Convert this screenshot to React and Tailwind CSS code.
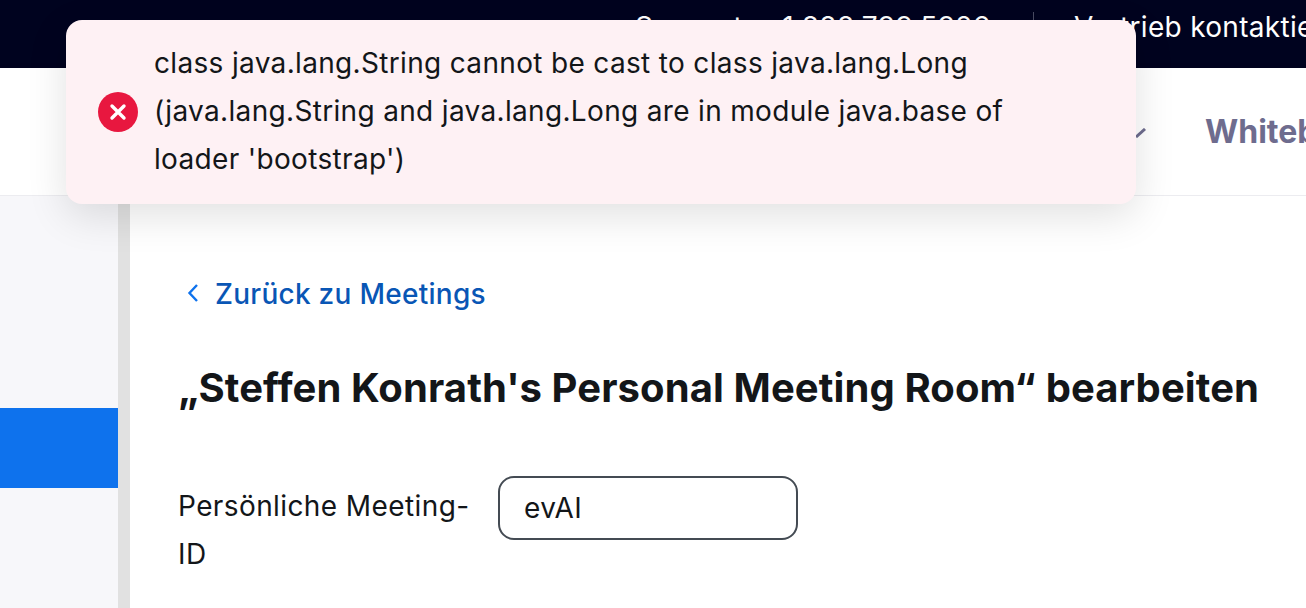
const App = () => {
  return (
    <div className="relative h-[608px] w-[1306px] overflow-hidden bg-white font-['Inter',sans-serif]">
      {/* Top bar */}
      <div className="flex h-[68px] items-center bg-[#00031f] pb-[14px] pl-[635px] text-white text-[28px] tracking-[0.3px] whitespace-nowrap">
        <div className="flex w-[357px] shrink-0 leading-[50px]">
          <span>Support:</span>
          <span className="ml-[31px]">1.888.799.5926</span>
        </div>
        <div className="ml-[41px] h-[30px] w-px shrink-0 bg-[#4a4c63]"></div>
        <span className="ml-[40px] shrink-0 leading-[50px]">Vertrieb kontaktieren</span>
      </div>

      {/* Nav */}
      <div className="flex h-[128px] items-center justify-end border-b border-[#ececf0] bg-white shadow-[0_2px_8px_rgba(0,0,0,0.07)] whitespace-nowrap">
        <svg width="12" height="10" viewBox="0 0 12 10" className="mr-[58px] mt-[2px]" fill="none">
          <path d="M1 9 L10 1" stroke="#6e6c8e" strokeWidth="3" />
        </svg>
        <div className="w-[101px] overflow-hidden text-[32px] font-bold text-[#6e6c8e]">Whiteboard</div>
      </div>

      {/* Body */}
      <div className="flex h-[412px]">
        <div className="w-[118px] bg-[#f7f7fa] pt-[212px]">
          <div className="h-[80px] bg-[#0e72ed]"></div>
        </div>
        <div className="w-[12px] bg-[#e1e1e1]"></div>
        <div className="flex-1 bg-white pl-[48px] pt-[78px]">
          <a className="flex items-center text-[#0956b5] text-[28px] tracking-[0.27px] leading-[40px] font-medium">
            <svg width="14" height="20" viewBox="0 0 14 20" className="ml-[8px] mr-[15px] mb-[2px]" fill="none">
              <path d="M11 2 L3.5 10 L11 18" stroke="#0e72ed" strokeWidth="2.4" />
            </svg>
            Zurück zu Meetings
          </a>
          <h1 className="mt-[49px] text-[40px] tracking-[0.1px] leading-[50px] font-bold text-[#131619] whitespace-nowrap">
            „Steffen Konrath's Personal Meeting Room“ bearbeiten
          </h1>
          <div className="mt-[63px] flex items-start">
            <label className="w-[320px] pt-[6px] text-[28px] tracking-[0.4px] leading-[48px] text-[#131619]">
              Persönliche Meeting-
              <br />
              ID
            </label>
            <div className="flex h-[64px] w-[300px] items-center rounded-[16px] border-2 border-[#444b53] pl-[24px] text-[28px] tracking-[0.4px] text-[#131619]">
              evAI
            </div>
          </div>
        </div>
      </div>

      {/* Error toast */}
      <div className="absolute left-[66px] top-[20px] flex h-[184px] w-[1070px] items-center rounded-[16px] bg-[#fef1f4] pl-[32px] shadow-[0_12px_40px_rgba(0,0,0,0.12)]">
        <svg width="40" height="40" viewBox="0 0 40 40" className="shrink-0">
          <circle cx="20" cy="20" r="20" fill="#e8173f" />
          <path d="M14 14 L26 26 M26 14 L14 26" stroke="#fff" strokeWidth="3.4" strokeLinecap="round" />
        </svg>
        <div className="ml-[16px] mb-[2px] w-[880px] text-[28px] tracking-[0.33px] leading-[48px] text-[#131619]">
          class java.lang.String cannot be cast to class java.lang.Long (java.lang.String and java.lang.Long are in module java.base of loader 'bootstrap')
        </div>
      </div>
    </div>
  );
};

export default App;
